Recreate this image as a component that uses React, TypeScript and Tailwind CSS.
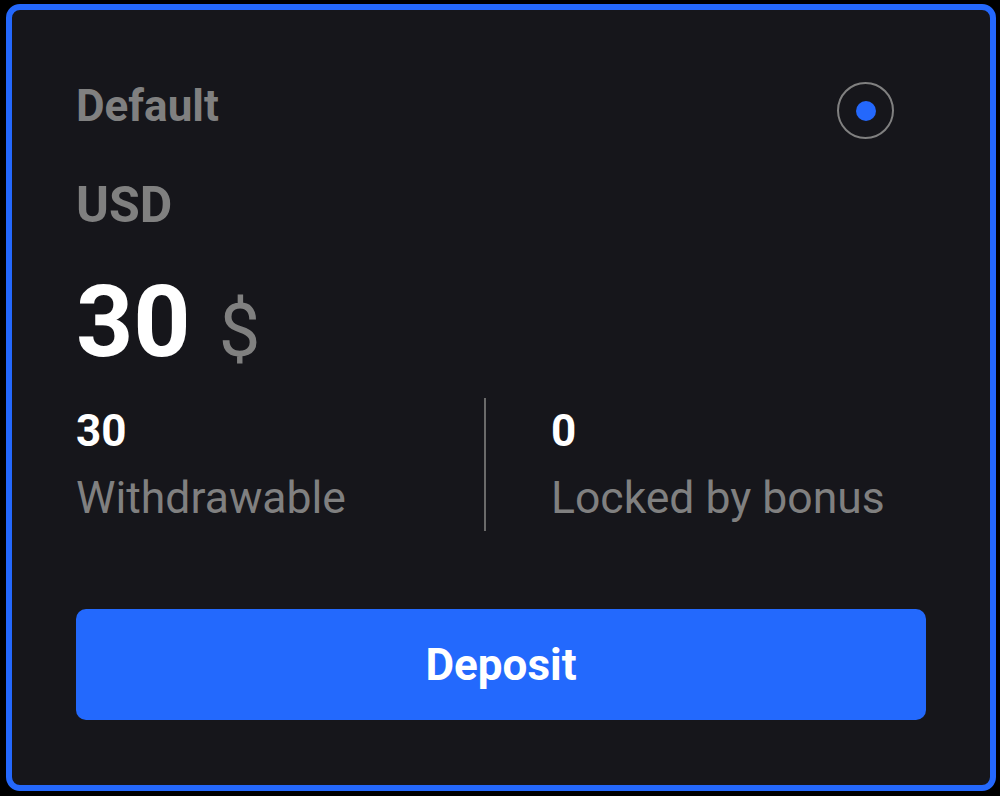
import React from "react";

export default function App() {
  return (
    <div className="w-[1000px] h-[796px] bg-black pt-[4px] pl-[6px]" style={{ fontFamily: "Roboto, 'Liberation Sans', sans-serif" }}>
      <div className="w-[990px] h-[787px] rounded-[14px] border-[6px] border-[#2468fc] bg-[#16161b] pt-[72px] pl-[64px] pr-[64px]">
        <div className="flex justify-between items-start h-[57px]">
          <div className="mt-[2px] text-[44px] leading-none font-bold text-[#808080]">Default</div>
          <div className="mr-[32px] w-[57px] h-[57px] rounded-full border-[2.5px] border-[#808080] flex items-center justify-center">
            <div className="w-[20px] h-[20px] rounded-full bg-[#2468fc]" />
          </div>
        </div>
        <div className="mt-[41px] text-[50px] leading-none font-bold text-[#808080]">USD</div>
        <div className="mt-[42px] flex items-baseline">
          <span className="text-[100px] leading-none font-bold text-white">30</span>
          <span className="ml-[28px] text-[74px] leading-none font-normal text-[#808080]">$</span>
        </div>
        <div className="mt-[26px] flex h-[133px]">
          <div className="w-[408px] pt-[11px]">
            <div className="text-[44px] leading-none font-bold text-white">30</div>
            <div className="mt-[23px] text-[44.5px] leading-none text-[#808080]">Withdrawable</div>
          </div>
          <div className="w-[2px] h-full bg-[#6a6a6a]" />
          <div className="pl-[65px] pt-[11px]">
            <div className="text-[44px] leading-none font-bold text-white">0</div>
            <div className="mt-[23px] text-[44.5px] leading-none text-[#808080]">Locked by bonus</div>
          </div>
        </div>
        <button className="mt-[78px] w-[850px] h-[111px] rounded-[10px] bg-[#2369fd] text-white text-[44px] font-bold leading-none flex items-center justify-center">
          Deposit
        </button>
      </div>
    </div>
  );
}
